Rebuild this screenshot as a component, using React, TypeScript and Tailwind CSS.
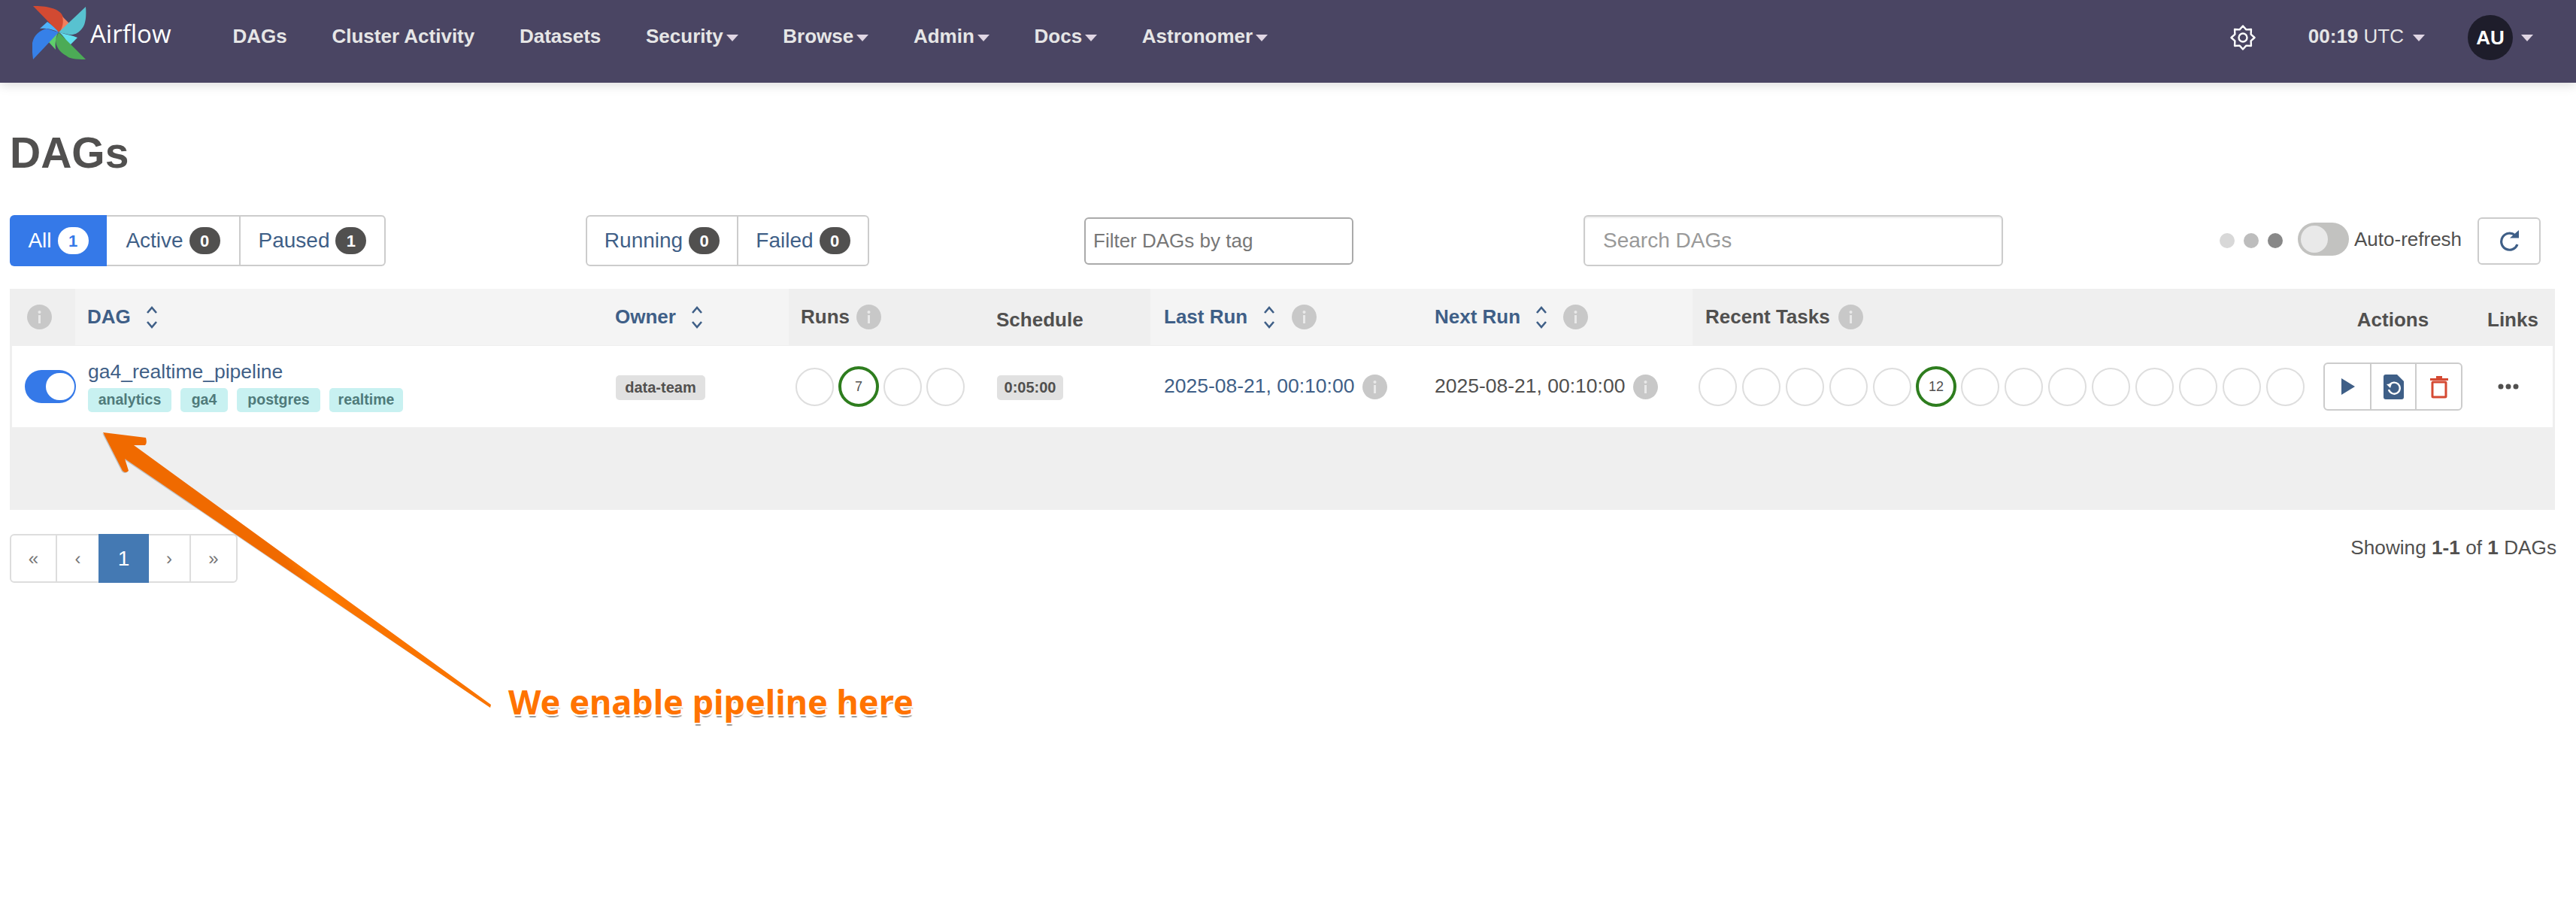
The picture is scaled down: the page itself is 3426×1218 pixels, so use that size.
import React from "react";

const font = "font-['Liberation_Sans',Arial,sans-serif]";

function Caret({ className = "" }: { className?: string }) {
  return <span className={`inline-block w-0 h-0 border-x-[8px] border-x-transparent border-t-[9px] border-t-[#e0d6e4] ${className}`} />;
}

function Logo() {
  return (
    <svg width="72" height="74" viewBox="43 7 72 74" className="shrink-0">
      <path d="M44 8C60 8 80 10 84 23C86 31 83 38 78 43Z" fill="#d24a32" />
      <path d="M83 22L94 33L79 43C83 37 85 30 83 22Z" fill="#f27f5e" />
      <path d="M114 9C115 20 114 27 112 33C108 42 100 47 92 46L78 43Z" fill="#58c2d0" />
      <path d="M79 43C88 46 96 47 103 50L92 61C88 53 84 47 79 43Z" fill="#62e0ee" />
      <path d="M114 79C100 79 92 78 88 74C80 70 74 62 74 53L78 43Z" fill="#4cab56" />
      <path d="M77 44L64 55L74 66C73 58 74 50 77 44Z" fill="#5fcf6b" />
      <path d="M44 79C43 70 42 63 43 57C45 47 53 40 62 38L78 43Z" fill="#3680e8" />
      <path d="M78 43C71 39 62 37 53 38L63 29C69 33 74 38 78 43Z" fill="#4fb3fa" />
    </svg>
  );
}

function Gear() {
  const pts = Array.from({ length: 16 }, (_, i) => {
    const r = i % 2 === 0 ? 15.5 : 11.5;
    const a = (i * Math.PI) / 8 - Math.PI / 2;
    return `${17 + r * Math.cos(a)},${17 + r * Math.sin(a)}`;
  }).join(" ");
  return (
    <svg width="34" height="34" viewBox="0 0 34 34" fill="none" stroke="#fff" strokeWidth="2.4" strokeLinejoin="round">
      <polygon points={pts} />
      <circle cx="17" cy="17" r="5.5" />
    </svg>
  );
}

function Info({ className = "" }: { className?: string }) {
  return (
    <svg width="33" height="33" viewBox="0 0 33 33" className={`shrink-0 ${className}`}>
      <circle cx="16.5" cy="16.5" r="16.5" fill="#c8c8c8" />
      <rect x="15" y="14" width="3" height="11" fill="#e9e9e9" />
      <circle cx="16.5" cy="10" r="2" fill="#e9e9e9" />
    </svg>
  );
}

function Sort() {
  return (
    <svg width="16" height="32" viewBox="0 0 16 32" fill="none" stroke="#3f5f87" strokeWidth="2.6" className="shrink-0">
      <path d="M2 10L8 3L14 10" />
      <path d="M2 22L8 29L14 22" />
    </svg>
  );
}

function Badge({ n, active }: { n: number; active?: boolean }) {
  return (
    <span className={`w-[41px] h-[36px] rounded-full flex items-center justify-center text-[22px] font-bold ${active ? "bg-white text-[#3579e8]" : "bg-[#51504f] text-white"}`}>
      {n}
    </span>
  );
}

function FilterBtn({ label, n, active, className = "" }: { label: string; n: number; active?: boolean; className?: string }) {
  return (
    <div className={`h-[68px] flex items-center justify-center gap-[8px] text-[28px] ${active ? "bg-[#3579e8] text-white" : "text-[#3f5f87] border-y-2 border-[#cccccc]"} ${className}`}>
      {label}
      <Badge n={n} active={active} />
    </div>
  );
}

function Circle({ label, green }: { label?: string; green?: boolean }) {
  return (
    <div className={`shrink-0 rounded-full flex items-center justify-center text-[#51504f] text-[18px] ${green ? "w-[54px] h-[54px] border-[4px] border-[#2e7d1e]" : "w-[51px] h-[51px] border-2 border-[#dedede]"}`}>
      {label}
    </div>
  );
}

const tagCls = "h-[32px] rounded-[5px] bg-[#c8f1f1] text-[#4f7a7a] text-[19.5px] font-bold flex items-center justify-center";
const chipCls = "h-[33px] rounded-[5px] bg-[#e1e1e1] text-[#51504f] text-[20px] font-bold flex items-center justify-center";

const cols = "grid-cols-[87px_702px_247px_260px_221px_362px_359px_838px_203px_105px]";

function Head({ children, light, center, className = "" }: { children: React.ReactNode; light?: boolean; center?: boolean; className?: string }) {
  return (
    <div className={`h-[75px] flex items-center text-[26px] font-bold ${light ? "bg-[#f4f4f4] text-[#3f5f87]" : "text-[#51504f]"} ${center ? "justify-center" : "pl-[16px]"} ${className}`}>
      {children}
    </div>
  );
}

export default function App() {
  return (
    <div className={`${font} relative w-[3426px] h-[1218px] bg-white overflow-hidden`}>
      <nav className="h-[110px] bg-[#4a4563] flex items-start shadow-[0_3px_14px_rgba(0,0,0,0.14)] relative">
        <a className="ml-[43px] mt-[7px] flex items-start">
          <Logo />
          <span className="ml-[5px] mt-[18px] text-[33px] leading-[40px] text-white font-['Open_Sans',sans-serif]">Airflow</span>
        </a>
        <div className="ml-[82px] mt-[33px] flex items-center gap-[59.7px] text-[26px] leading-[30px] font-bold text-[#e6e6e6]">
          <span>DAGs</span>
          <span>Cluster Activity</span>
          <span>Datasets</span>
          {["Security", "Browse", "Admin", "Docs", "Astronomer"].map((t) => (
            <span key={t} className="flex items-center gap-[4px]">
              {t}
              <Caret className="mt-[4px]" />
            </span>
          ))}
        </div>
        <div className="ml-auto flex items-center h-[100px] pr-[57px]">
          <Gear />
          <span className="ml-[70px] text-[26px] text-[#e6e6e6] mt-[-4px]"><b>00:19</b> UTC</span>
          <Caret className="ml-[12px]" />
          <span className="ml-[57px] w-[60px] h-[60px] rounded-full bg-[#1e1d2b] text-white text-[26px] font-bold flex items-center justify-center">AU</span>
          <Caret className="ml-[11px]" />
        </div>
      </nav>

      <main className="px-[13px]">
        <h1 className="mt-[59px] h-[68px] text-[57px] leading-[68px] font-bold text-[#51504f]">DAGs</h1>

        <div className="mt-[49px] flex items-center h-[68px]">
          <div className="flex">
            <FilterBtn label="All" n={1} active className="w-[129px] rounded-l-[6px]" />
            <FilterBtn label="Active" n={0} className="w-[178px] border-r-2" />
            <FilterBtn label="Paused" n={1} className="w-[193px] border-r-2 rounded-r-[6px]" />
          </div>
          <div className="flex ml-[266px]">
            <FilterBtn label="Running" n={0} className="w-[203px] border-x-2 rounded-l-[6px]" />
            <FilterBtn label="Failed" n={0} className="w-[174px] border-r-2 rounded-r-[6px]" />
          </div>
          <div className="ml-[286px] w-[358px] h-[63px] border-2 border-[#aaaaaa] rounded-[6px] flex items-center pl-[10px] text-[26px] text-[#777777]">Filter DAGs by tag</div>
          <div className="ml-[306px] w-[558px] h-[68px] border-2 border-[#cccccc] rounded-[6px] flex items-center pl-[24px] text-[28px] text-[#999999] shadow-[inset_0_2px_2px_rgba(0,0,0,0.07)]">Search DAGs</div>
          <div className="ml-[288px] flex items-center gap-[12px]">
            <span className="w-[20px] h-[20px] rounded-full bg-[#d8d8d8]" />
            <span className="w-[20px] h-[20px] rounded-full bg-[#bdbdbd]" />
            <span className="w-[20px] h-[20px] rounded-full bg-[#888888]" />
          </div>
          <div className="ml-[20px] w-[68px] h-[44px] rounded-full bg-[#c2c2c0] flex items-center pl-[4px] mt-[-4px]">
            <span className="w-[36px] h-[36px] rounded-full bg-[#e9e9e9]" />
          </div>
          <span className="ml-[7px] text-[26px] text-[#51504f] mt-[-4px]">Auto-refresh</span>
          <div className="ml-[21px] w-[84px] h-[63px] border-2 border-[#cccccc] rounded-[6px] flex items-center justify-center">
            <svg width="28" height="28" viewBox="0 0 28 28" fill="none" stroke="#3f5f87" strokeWidth="3.2">
              <path d="M22 7A11 11 0 1 0 25 19" />
              <path d="M15 10.5H27V0Z" fill="#3f5f87" stroke="none" />
            </svg>
          </div>
        </div>

        <div className="mt-[30px] w-[3385px] h-[294px] bg-[#efefef] pb-[110px]">
          <div className={`grid ${cols} h-[76px]`}>
            <div className="h-[75px] flex items-center justify-center pr-[9px]"><Info /></div>
            <Head light><span>DAG</span><span className="ml-[20px]"><Sort /></span></Head>
            <Head light><span>Owner</span><span className="ml-[20px]"><Sort /></span></Head>
            <Head><span>Runs</span><Info className="ml-[9px]" /></Head>
            <Head className="pt-[8px]">Schedule</Head>
            <Head light className="!pl-[18px]"><span>Last Run</span><span className="ml-[21px]"><Sort /></span><Info className="ml-[22px]" /></Head>
            <Head light><span>Next Run</span><span className="ml-[20px]"><Sort /></span><Info className="ml-[21px]" /></Head>
            <Head className="!pl-[17px]"><span>Recent Tasks</span><Info className="ml-[11px]" /></Head>
            <Head center className="pt-[8px] pr-[16px]">Actions</Head>
            <Head className="pt-[8px] !pl-[16px]">Links</Head>
          </div>
          <div className={`grid ${cols} h-[108px] bg-white ml-[3px] w-[3379px] items-center text-[26.5px]`}>
            <div className="flex pl-[17px]">
              <div className="w-[68px] h-[44px] rounded-full bg-[#3579e8] flex items-center justify-end pr-[2px]">
                <span className="w-[38px] h-[36px] rounded-full bg-white" />
              </div>
            </div>
            <div className="pl-[14px] flex flex-col gap-[5px]">
              <span className="text-[#3f5f87] leading-[34px] mt-[-3px]">ga4_realtime_pipeline</span>
              <div className="flex gap-[12px]">
                <span className={`${tagCls} w-[111px]`}>analytics</span>
                <span className={`${tagCls} w-[63px]`}>ga4</span>
                <span className={`${tagCls} w-[111px]`}>postgres</span>
                <span className={`${tagCls} w-[98px]`}>realtime</span>
              </div>
            </div>
            <div className="pl-[14px]"><span className={`${chipCls} w-[119px] mt-[2px]`}>data-team</span></div>
            <div className="pl-[6px] flex items-center gap-[6px]">
              <Circle />
              <Circle label="7" green />
              <Circle />
              <Circle />
            </div>
            <div className="pl-[14px]"><span className={`${chipCls} w-[88px] mt-[2px]`}>0:05:00</span></div>
            <div className="pl-[15px] flex items-center text-[#3f5f87]">2025-08-21, 00:10:00<Info className="ml-[11px]" /></div>
            <div className="pl-[13px] flex items-center text-[#51504f]">2025-08-21, 00:10:00<Info className="ml-[11px]" /></div>
            <div className="pl-[5px] flex items-center gap-[7px]">
              {Array.from({ length: 14 }, (_, i) =>
                i === 5 ? <div key={i} className="mx-[-1px]"><Circle label="12" green /></div> : <Circle key={i} />
              )}
            </div>
            <div className="flex">
              <div className="w-[185px] h-[64px] ml-[-2px] border-2 border-[#cccccc] rounded-[6px] flex">
                <div className="w-[60px] flex items-center justify-center pl-[2px]">
                  <svg width="18" height="22" viewBox="0 0 18 22"><path d="M0 0L18 11L0 22Z" fill="#3f5f87" /></svg>
                </div>
                <div className="w-[62px] border-x-2 border-[#cccccc] flex items-center justify-center">
                  <svg width="27" height="33" viewBox="0 0 27 33">
                    <path d="M3 0H18L27 9V30A3 3 0 0 1 24 33H3A3 3 0 0 1 0 30V3A3 3 0 0 1 3 0Z" fill="#3f5f87" />
                    <path d="M8 14A7.5 7.5 0 1 1 7 20" fill="none" stroke="#fff" strokeWidth="2.4" />
                    <path d="M4 13L11 12L9 18Z" fill="#fff" />
                  </svg>
                </div>
                <div className="flex-1 flex items-center justify-center">
                  <svg width="24" height="31" viewBox="0 0 24 31" fill="none">
                    <path d="M0 4H24V7H0ZM8 1H16V4H8Z" fill="#d54a33" />
                    <rect x="3" y="9" width="18" height="20" rx="1" stroke="#d54a33" strokeWidth="3" />
                  </svg>
                </div>
              </div>
            </div>
            <div className="pl-[27px] flex">
              <svg width="28" height="8" viewBox="0 0 28 8" fill="#51504f"><circle cx="4" cy="4" r="3.5" /><circle cx="14" cy="4" r="3.5" /><circle cx="24" cy="4" r="3.5" /></svg>
            </div>
          </div>
        </div>

        <div className="mt-[32px] flex items-start justify-between w-[3387px]">
          <div className="flex h-[65px] border-2 border-[#dddddd] rounded-[6px] w-[303px] text-[24px] text-[#777777]">
            <span className="w-[61px] flex items-center justify-center border-r-2 border-[#dddddd]">«</span>
            <span className="w-[55px] flex items-center justify-center">‹</span>
            <span className="w-[67px] -my-[2px] flex items-center justify-center bg-[#4479b3] text-white text-[28px]">1</span>
            <span className="w-[56px] flex items-center justify-center border-r-2 border-[#dddddd]">›</span>
            <span className="flex-1 flex items-center justify-center">»</span>
          </div>
          <div className="text-[26.2px] text-[#51504f] leading-[36px]">Showing <b>1-1</b> of <b>1</b> DAGs</div>
        </div>
      </main>

      <svg className="absolute left-0 top-0 pointer-events-none" width="700" height="960" viewBox="0 0 700 960">
        <defs>
          <linearGradient id="arrow" gradientUnits="userSpaceOnUse" x1="395" y1="770" x2="425" y2="750">
            <stop offset="0" stopColor="#f06a00" />
            <stop offset="0.6" stopColor="#ff7c00" />
            <stop offset="1" stopColor="#fa7400" />
          </linearGradient>
        </defs>
        <path d="M653 940L166 610L171 626Q167 630 163 626L137 575Z" fill="#888888" transform="translate(-1 1)" opacity="0.45" />
        <path d="M137 575L194 582Q196 590 193 592L178 592L653 937L652 941L166 610L171 626Q167 630 163 626Z" fill="url(#arrow)" />
      </svg>
      <div className="absolute left-[676px] top-[902px] text-[45px] leading-[62px] font-bold text-[#ff7300] font-['Noto_Sans',sans-serif] whitespace-nowrap [text-shadow:2px_0_0_#fff,-2px_0_0_#fff,0_2px_0_#fff,0_-2px_0_#fff,2px_2px_0_#fff,-2px_2px_0_#fff,2px_-2px_0_#fff,-2px_-2px_0_#fff,1px_4px_1px_#999]">
        We enable pipeline here
      </div>
    </div>
  );
}
